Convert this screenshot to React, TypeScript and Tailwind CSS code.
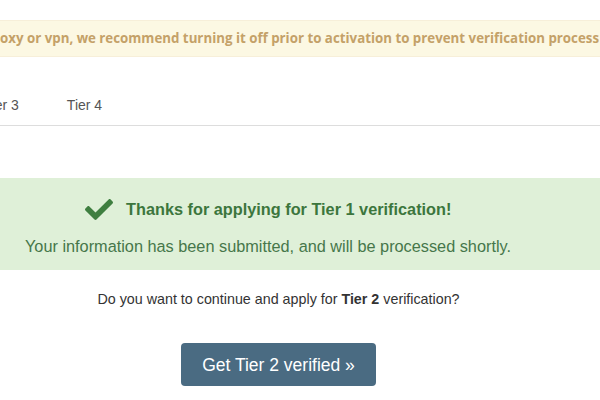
import React from 'react';

const CheckIcon: React.FC = () => (
  <svg viewBox="0 64 512 384" className="w-[28px] h-[21px] shrink-0" fill="#3f7f40">
    <path d="M173.898 439.404l-166.4-166.4c-9.997-9.997-9.997-26.206 0-36.204l36.203-36.204c9.997-9.998 26.207-9.998 36.204 0L192 312.69 432.095 72.596c9.997-9.997 26.207-9.997 36.204 0l36.203 36.204c9.997 9.997 9.997 26.206 0 36.204l-294.4 294.401c-9.998 9.997-26.207 9.997-36.204-.001z" />
  </svg>
);

const tabs = ['Tier 1', 'Tier 2', 'Tier 3', 'Tier 4'];

const App: React.FC = () => {
  return (
    <div className="w-[600px] h-[400px] overflow-hidden bg-white font-['Liberation_Sans',Arial,sans-serif]">
      <div className="pt-[20px]">
        <div className="h-[37px] bg-[#fcf8e3] border-y border-[#f7efd9] flex items-center overflow-hidden">
          <div className="w-0 flex justify-end">
            <span className="whitespace-nowrap text-[13.3px] font-bold text-[#c4a168] font-['Open_Sans',sans-serif]">If you are using a pr</span>
          </div>
          <span className="whitespace-nowrap text-[13.3px] font-bold text-[#c4a168] font-['Open_Sans',sans-serif]">
            oxy or vpn, we recommend turning it off prior to activation to prevent verification process issues.
          </span>
        </div>

        <div className="mt-[29px] border-b border-[#dddddd] flex ml-[-207px]">
          {tabs.map((t) => (
            <div key={t} className="px-6 h-[39px] flex items-center text-[14px] text-[#555555] whitespace-nowrap">
              {t}
            </div>
          ))}
        </div>

        <div className="mt-[52px] h-[92px] bg-[#dff0d8] text-[#3c763d] flex flex-col items-start">
          <div className="flex items-center gap-[13px] ml-[85px] mt-[19px]">
            <CheckIcon />
            <span className="text-[16.3px] font-bold">Thanks for applying for Tier 1 verification!</span>
          </div>
          <p className="ml-[25px] mt-[13px] text-[16.3px] text-[#46774a]">Your information has been submitted, and will be processed shortly.</p>
        </div>

        <p className="mt-[19px] text-center text-[14.3px] text-[#333333] ml-[-43px]">
          Do you want to continue and apply for <b>Tier 2</b> verification?
        </p>

        <div className="flex justify-center mt-[33px] ml-[-43px]">
          <button className="w-[195px] h-[43px] rounded-[4px] bg-[#4a6b82] text-white text-[17.5px]">
            Get Tier 2 verified »
          </button>
        </div>
      </div>
    </div>
  );
};

export default App;
